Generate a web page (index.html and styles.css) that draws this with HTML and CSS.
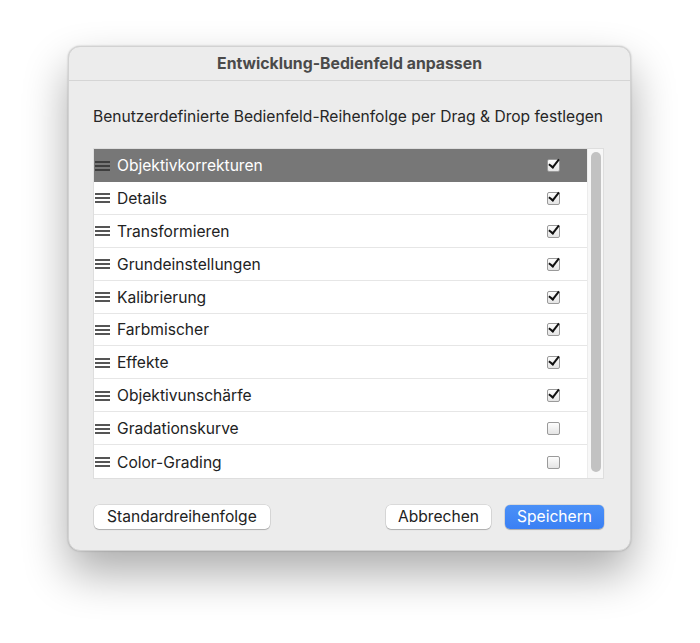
FILE: index.html
```html
<!DOCTYPE html>
<html lang="de">
<head>
<meta charset="utf-8">
<link rel="stylesheet" href="styles.css">
</head>
<body>
<div class="dialog">
  <div class="titlebar">Entwicklung-Bedienfeld anpassen</div>
  <div class="content">
    <p class="hint">Benutzerdefinierte Bedienfeld-Reihenfolge per Drag &amp; Drop festlegen</p>
    <div class="list">
      <div class="rows">
        <div class="row selected"><span class="grip"></span><span class="label">Objektivkorrekturen</span><span class="cb on"></span></div>
        <div class="row"><span class="grip"></span><span class="label">Details</span><span class="cb on"></span></div>
        <div class="row"><span class="grip"></span><span class="label">Transformieren</span><span class="cb on"></span></div>
        <div class="row"><span class="grip"></span><span class="label">Grundeinstellungen</span><span class="cb on"></span></div>
        <div class="row"><span class="grip"></span><span class="label">Kalibrierung</span><span class="cb on"></span></div>
        <div class="row"><span class="grip"></span><span class="label">Farbmischer</span><span class="cb on"></span></div>
        <div class="row"><span class="grip"></span><span class="label">Effekte</span><span class="cb on"></span></div>
        <div class="row"><span class="grip"></span><span class="label">Objektivunschärfe</span><span class="cb on"></span></div>
        <div class="row"><span class="grip"></span><span class="label">Gradationskurve</span><span class="cb"></span></div>
        <div class="row"><span class="grip"></span><span class="label">Color-Grading</span><span class="cb"></span></div>
      </div>
      <div class="scroll"><div class="thumb"></div></div>
    </div>
    <div class="buttons">
      <button class="btn">Standardreihenfolge</button>
      <span class="spacer"></span>
      <button class="btn">Abbrechen</button>
      <button class="btn primary">Speichern</button>
    </div>
  </div>
</div>
</body>
</html>
```

FILE: styles.css
```css
html {
  margin: 0;
  height: 100%;
  background: #ffffff;
}
body {
  margin: 0;
  min-height: 100%;
  box-sizing: border-box;
  padding: 46px 0 0 68px;
  font-family: Inter, "Noto Sans", sans-serif;
  color: #222;
}
.dialog {
  width: 563px;
  height: 505px;
  box-sizing: border-box;
  background: #ececec;
  border-radius: 12px;
  border: 1px solid #d2d2d2;
  box-shadow: 0 22px 45px rgba(0,0,0,0.33), 0 0 2px rgba(0,0,0,0.25);
  display: flex;
  flex-direction: column;
  overflow: hidden;
}
.titlebar {
  height: 34px;
  border-bottom: 1px solid #d5d5d5;
  display: flex;
  align-items: center;
  justify-content: center;
  font-weight: 700;
  font-size: 15.8px;
  color: #4a4a4a;
  box-sizing: border-box;
}
.content {
  padding: 0 26px 0 24px;
  display: flex;
  flex-direction: column;
}
.hint {
  margin: 26px 0 0 0;
  height: 20px;
  line-height: 20px;
  font-size: 15.6px;
  color: #262626;
  white-space: nowrap;
}
.list {
  margin-top: 21px;
  height: 331px;
  box-sizing: border-box;
  border: 1px solid #dedede;
  background: #fafafa;
  display: flex;
}
.rows {
  width: 493px;
  background: #fff;
  display: flex;
  flex-direction: column;
}
.row {
  height: 33px;
  box-sizing: border-box;
  border-bottom: 1px solid #e6e6e6;
  display: flex;
  align-items: center;
  font-size: 15.6px;
  color: #222;
  padding-top: 1px;
}
.row:last-child { border-bottom: none; }
.row.selected {
  background: #777777;
  color: #fff;
  border-bottom: none;
}
.grip {
  width: 15px;
  height: 10px;
  margin: 0 7px 0 1px;
  background: linear-gradient(#555 0 2px, transparent 2px 4px, #555 4px 6px, transparent 6px 8px, #555 8px 10px);
}
.selected .grip {
  background: linear-gradient(#3e3e3e 0 2px, transparent 2px 4px, #3e3e3e 4px 6px, transparent 6px 8px, #3e3e3e 8px 10px);
}
.label { flex: 1; }
.cb {
  width: 11px;
  height: 11px;
  margin-right: 27px;
  border: 1px solid #9a9a9a;
  border-radius: 2px;
  background: linear-gradient(#fdfdfd, #e4e4e4);
  position: relative;
}
.cb.on::after {
  content: "";
  position: absolute;
  left: 3px;
  top: -3px;
  width: 4px;
  height: 9px;
  border-right: 2px solid #111;
  border-bottom: 2px solid #111;
  transform: rotate(38deg);
}
.scroll {
  flex: 1;
  display: flex;
  justify-content: center;
  padding: 3px 0 6px;
  background: #f7f7f7;
  border-left: 1px solid #ececec;
}
.thumb {
  width: 10px;
  background: #c2c2c2;
  border-radius: 5px;
}
.buttons {
  margin-top: 26px;
  display: flex;
  gap: 14px;
  align-items: center;
}
.spacer { flex: 1; }
.btn {
  height: 24px;
  font-family: Inter, "Noto Sans", sans-serif;
  font-size: 15.6px;
  color: #222;
  background: #fff;
  border: none;
  border-radius: 5px;
  box-shadow: 0 0 0 0.5px rgba(0,0,0,0.15), 0 1px 1px rgba(0,0,0,0.2);
  padding: 0 12px;
  line-height: 24px;
}
.btn:first-child { margin-left: 1px; padding: 0 13px; }
.btn.primary {
  background: linear-gradient(#4b90f7, #3a80f4);
  color: #fff;
}
```
